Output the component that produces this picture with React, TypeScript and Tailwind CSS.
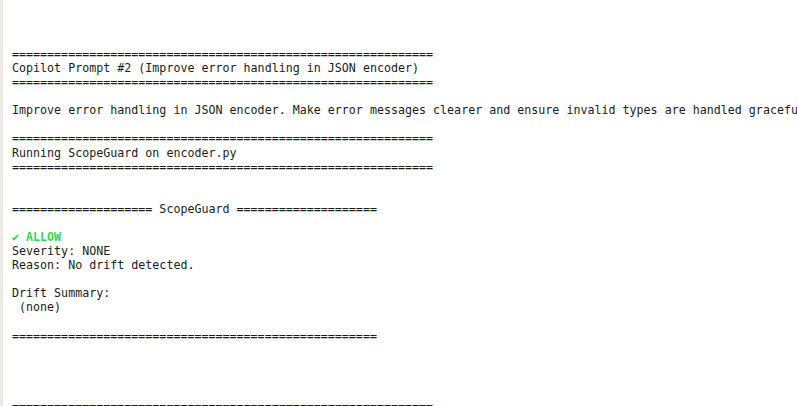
import React from "react";

const lines: { t: string; green?: boolean }[] = [
  { t: "============================================================" },
  { t: "Copilot Prompt #2 (Improve error handling in JSON encoder)" },
  { t: "============================================================" },
  { t: "" },
  { t: "Improve error handling in JSON encoder. Make error messages clearer and ensure invalid types are handled gracefully." },
  { t: "" },
  { t: "============================================================" },
  { t: "Running ScopeGuard on encoder.py" },
  { t: "============================================================" },
  { t: "" },
  { t: "" },
  { t: "==================== ScopeGuard ====================" },
  { t: "" },
  { t: "✔ ALLOW", green: true },
  { t: "Severity: NONE" },
  { t: "Reason: No drift detected." },
  { t: "" },
  { t: "Drift Summary:" },
  { t: " (none)" },
  { t: "" },
  { t: "====================================================" },
  { t: "" },
  { t: "" },
  { t: "" },
  { t: "" },
  { t: "============================================================" },
];

export default function App() {
  return (
    <div className="flex h-[406px] w-[797px] overflow-hidden bg-white">
      <div className="w-[3px] shrink-0 bg-[#eee8e6]" />
      <div
        className="flex-1 overflow-hidden pl-[9px] pt-[47px] text-[11.67px] leading-[14.08px] text-[#1c1c1c]"
        style={{ fontFamily: '"DejaVu Sans Mono", "Liberation Mono", monospace' }}
      >
        {lines.map((l, i) => (
          <div
            key={i}
            className={
              l.green
                ? "h-[14.08px] whitespace-pre font-semibold text-[#2fd35a]"
                : "h-[14.08px] whitespace-pre"
            }
          >
            {l.t}
          </div>
        ))}
      </div>
    </div>
  );
}
